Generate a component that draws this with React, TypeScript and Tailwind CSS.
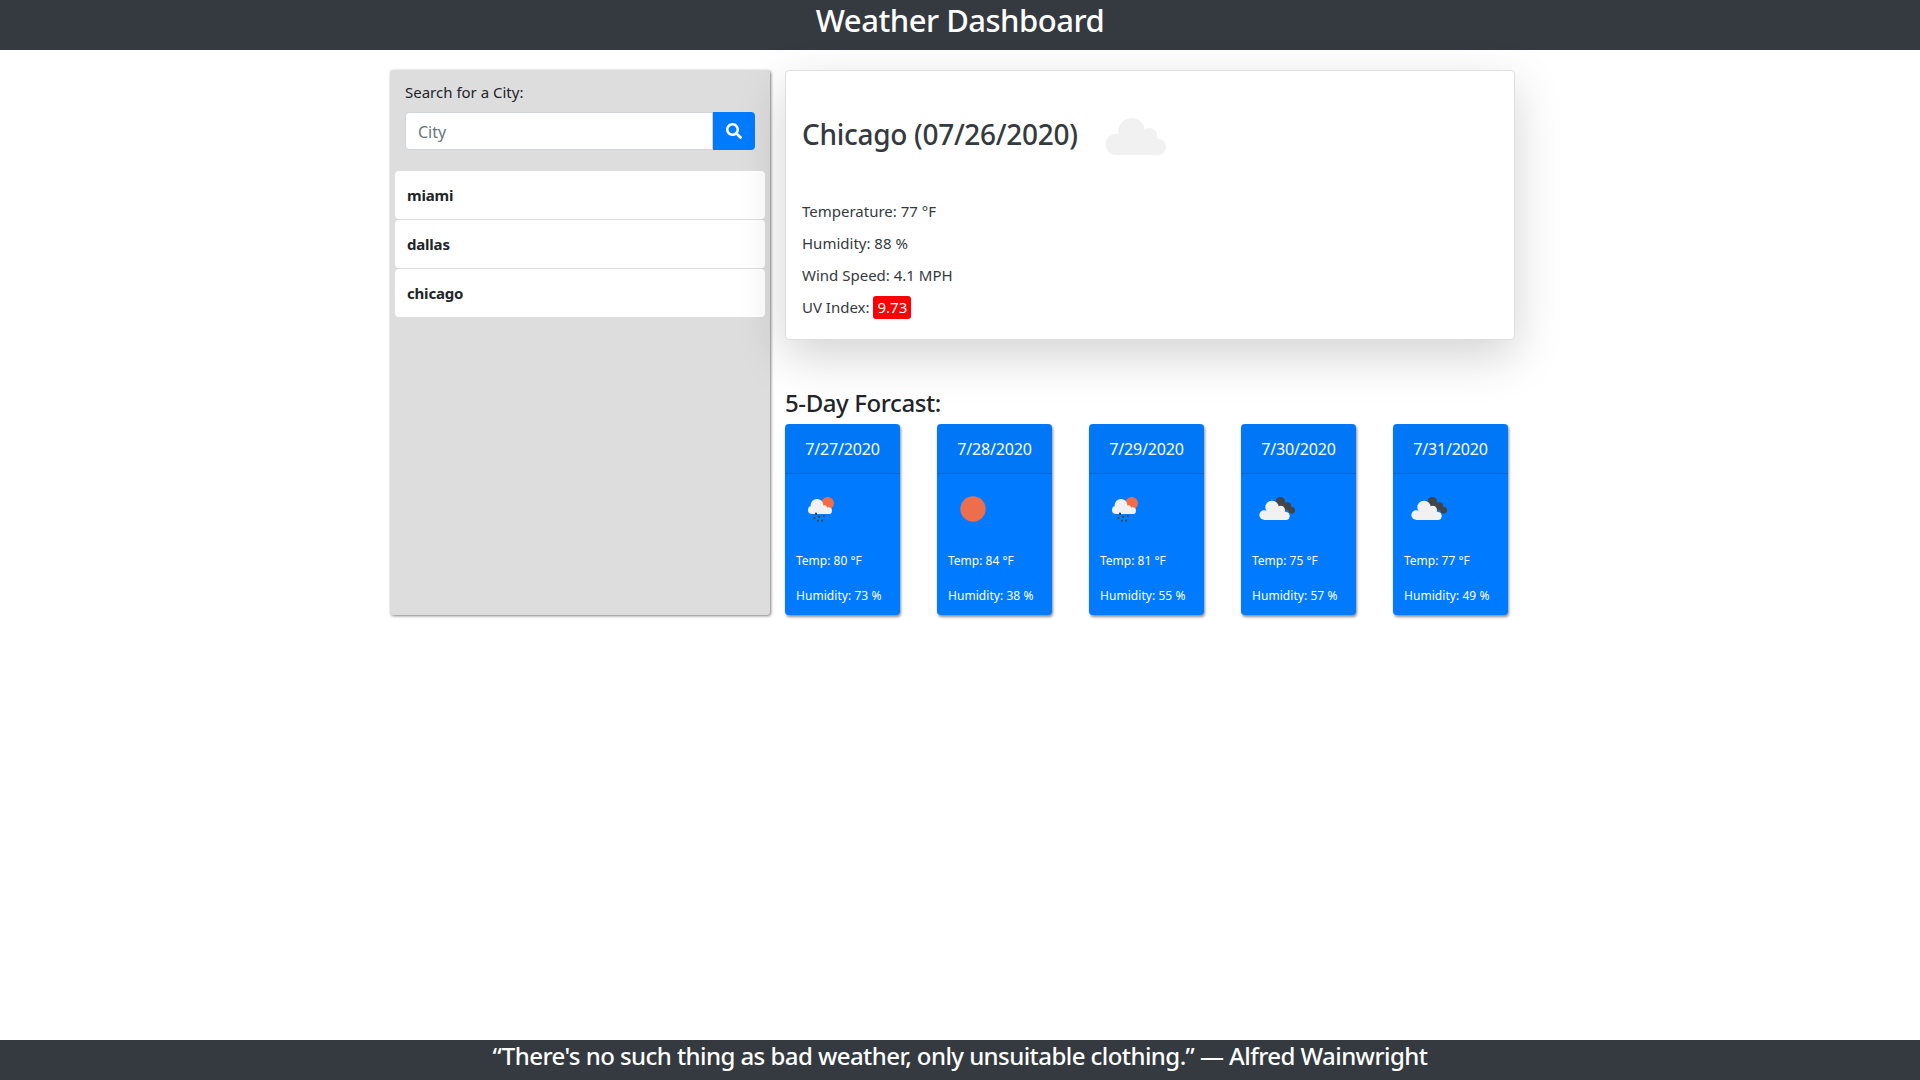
import { FaSearch } from "react-icons/fa";

type IconKind = "rain" | "sun" | "dark";

const days: { date: string; temp: number; humidity: number; icon: IconKind }[] = [
  { date: "7/27/2020", temp: 80, humidity: 73, icon: "rain" },
  { date: "7/28/2020", temp: 84, humidity: 38, icon: "sun" },
  { date: "7/29/2020", temp: 81, humidity: 55, icon: "rain" },
  { date: "7/30/2020", temp: 75, humidity: 57, icon: "dark" },
  { date: "7/31/2020", temp: 77, humidity: 49, icon: "dark" },
];

const cities = ["miami", "dallas", "chicago"];

function BigCloud() {
  return (
    <svg width="90" height="60" viewBox="0 0 270 180" className="ml-[3px] shrink-0" fill="#f1f1f1">
      <circle cx="122" cy="82" r="40" />
      <circle cx="175" cy="95" r="23" />
      <circle cx="76" cy="121" r="32" />
      <circle cx="200" cy="129" r="25" />
      <rect x="76" y="100" width="124" height="53" />
    </svg>
  );
}

function ForecastIcon({ kind }: { kind: IconKind }) {
  if (kind === "sun") {
    return (
      <svg width="90" height="50" viewBox="0 0 270 150" className="ml-[5px] mt-[6px]">
        <circle cx="93" cy="87" r="38" fill="#ec6e4c" />
      </svg>
    );
  }
  if (kind === "rain") {
    return (
      <svg width="90" height="50" viewBox="0 0 270 150" className="ml-[5px] mt-[6px]">
        <circle cx="113" cy="70" r="19" fill="#ec6e4c" />
        <g fill="#f1f1f1">
          <circle cx="81" cy="76" r="19" />
          <circle cx="66" cy="90" r="12" />
          <circle cx="103" cy="84" r="8" />
          <circle cx="116" cy="92" r="10" />
          <rect x="66" y="85" width="50" height="17" />
        </g>
        <g fill="#444">
          <rect x="75" y="98" width="6" height="7" />
          <rect x="71" y="111" width="5" height="6" />
          <rect x="85" y="108" width="5" height="6" />
          <rect x="99" y="105" width="5" height="6" />
          <rect x="81" y="120" width="5" height="5" />
          <rect x="94" y="119" width="5" height="6" />
        </g>
      </svg>
    );
  }
  return (
    <svg width="90" height="50" viewBox="0 0 270 150" className="ml-[5px] mt-[6px]">
      <g transform="translate(12 0)" fill="#444">
        <circle cx="91" cy="65" r="14" />
        <circle cx="112" cy="79" r="12" />
        <circle cx="125" cy="91" r="10" />
      </g>
      <g transform="translate(12 0)" fill="#f1f1f1">
        <circle cx="66" cy="82" r="20" />
        <circle cx="92" cy="90" r="13" />
        <circle cx="42" cy="105" r="14" />
        <circle cx="107" cy="108" r="12" />
        <rect x="42" y="95" width="65" height="25" />
      </g>
    </svg>
  );
}

export default function App() {
  return (
    <div className="min-h-screen flex flex-col bg-white text-[#212529] font-['Noto_Sans',sans-serif]">
      <header className="h-[50px] bg-[#343a40] text-white text-center text-[31px] leading-[41px] font-medium tracking-[-0.5px]">
        Weather Dashboard
      </header>

      <main className="w-[1140px] mx-auto flex pt-5">
        <aside className="w-[380px] h-[545px] shrink-0 bg-[#ddd] rounded-[3px] shadow-[1px_1px_3px_rgba(0,0,0,0.5)] px-[5px] pt-[10px]">
          <label className="block ml-[10px] text-[15px] leading-6 tracking-[0px]">Search for a City:</label>
          <div className="flex mx-[10px] mt-[8px] h-[38px]">
            <div className="flex-1 bg-white border border-[#ced4da] rounded-l-[4px] pl-3 text-[16px] leading-[38px] text-[#6c757d]">City</div>
            <button className="w-[42px] bg-[#007bff] text-white rounded-r-[4px] flex items-center justify-center">
              <FaSearch size={16} />
            </button>
          </div>
          <ul className="mt-[21px] flex flex-col gap-px">
            {cities.map((city) => (
              <li key={city} className="h-12 bg-white rounded-[4px] pl-3 text-[15px] leading-[48px] font-bold tracking-[-0.2px]">
                {city}
              </li>
            ))}
          </ul>
        </aside>

        <section className="ml-[15px] w-[730px]">
          <div className="h-[270px] bg-white border border-[#dfdfdf] rounded-[4px] shadow-[0_16px_48px_rgba(0,0,0,0.175)] pl-[16px] pt-[33px] text-[#343a40]">
            <div className="flex items-center h-[60px]">
              <h2 className="text-[28px] leading-[40px] font-medium mr-[10px] tracking-[-0.3px]">Chicago (07/26/2020)</h2>
              <BigCloud />
            </div>
            <div className="mt-[35px] text-[15px] leading-6 flex flex-col gap-2">
              <p>Temperature: 77 °F</p>
              <p>Humidity: 88 %</p>
              <p>Wind Speed: 4.1 MPH</p>
              <p>
                UV Index:{" "}
                <span className="inline-block bg-[#ff0000] text-white rounded-[3px] px-[4px] leading-[23px]">9.73</span>
              </p>
            </div>
          </div>

          <h4 className="mt-[48px] text-[24px] leading-[29px] font-medium tracking-[-0.4px]">5-Day Forcast:</h4>
          <div className="flex gap-[37px] mt-[7px]">
            {days.map((day) => (
              <div key={day.date} className="w-[115px] h-[191px] bg-[#007bff] text-white rounded-[4px] shadow-[1px_2px_3px_rgba(0,0,0,0.45)]">
                <div className="h-[50px] bg-[rgba(0,0,0,0.03)] border-b border-[rgba(0,0,0,0.125)] text-center text-[16px] leading-[50px] tracking-[-0.15px]">
                  {day.date}
                </div>
                <ForecastIcon kind={day.icon} />
                <p className="mt-[21px] ml-[11px] text-[12px] leading-[19px]">Temp: {day.temp} °F</p>
                <p className="mt-4 ml-[11px] text-[12px] leading-[19px] tracking-[0.05px]">Humidity: {day.humidity} %</p>
              </div>
            ))}
          </div>
        </section>
      </main>

      <footer className="mt-auto h-10 bg-[#343a40] text-white text-center text-[24px] leading-[31px] font-medium tracking-[-0.56px]">
        “There's no such thing as bad weather, only unsuitable clothing.” — Alfred Wainwright
      </footer>
    </div>
  );
}
